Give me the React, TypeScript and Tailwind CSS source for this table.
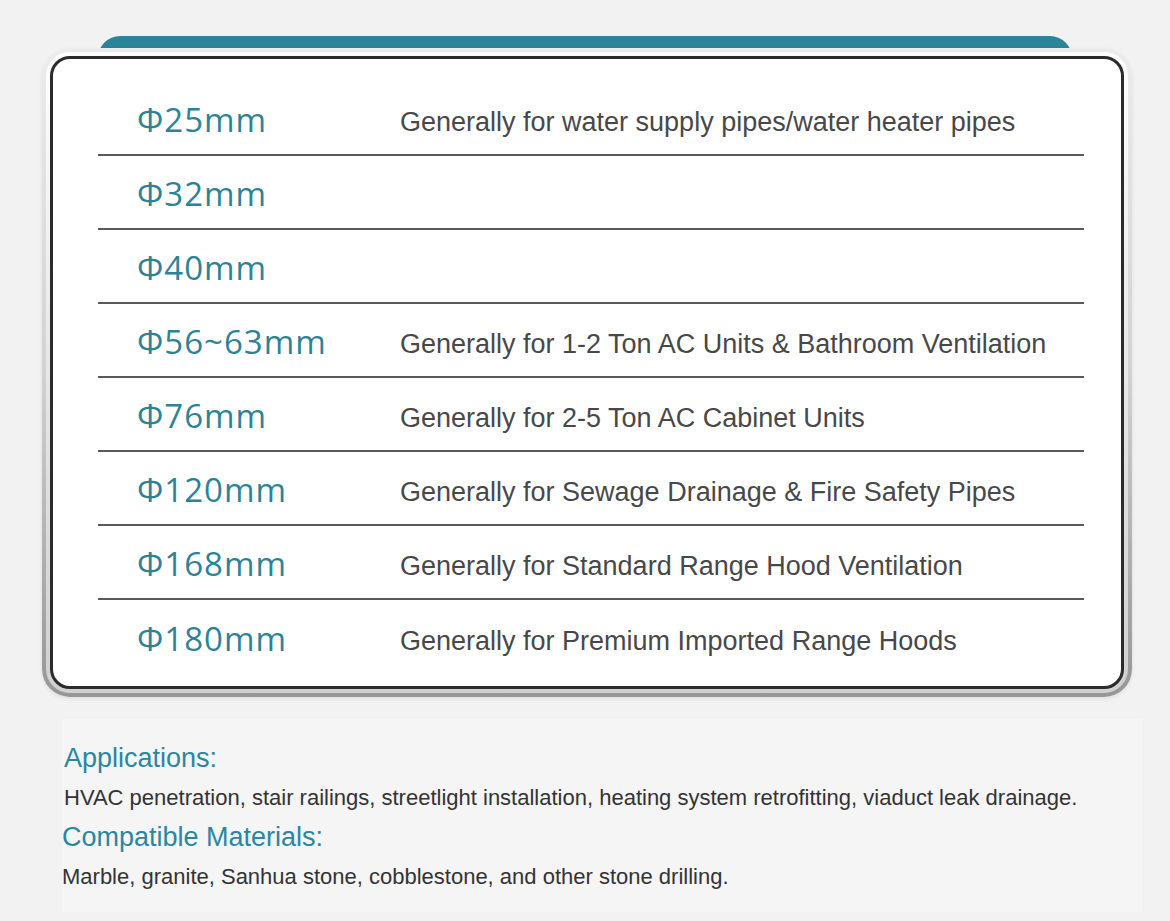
const rows = [
  { size: 'Φ25mm', use: 'Generally for water supply pipes/water heater pipes' },
  { size: 'Φ32mm', use: '' },
  { size: 'Φ40mm', use: '' },
  { size: 'Φ56~63mm', use: 'Generally for 1-2 Ton AC Units & Bathroom Ventilation' },
  { size: 'Φ76mm', use: 'Generally for 2-5 Ton AC Cabinet Units' },
  { size: 'Φ120mm', use: 'Generally for Sewage Drainage & Fire Safety Pipes' },
  { size: 'Φ168mm', use: 'Generally for Standard Range Hood Ventilation' },
  { size: 'Φ180mm', use: 'Generally for Premium Imported Range Hoods' },
];

export default function App() {
  return (
    <div
      className="h-[921px] w-[1170px] overflow-hidden bg-[#f2f2f2]"
      style={{ fontFamily: '"Liberation Sans", Arial, sans-serif' }}
    >
      <div className="px-[42px] pt-[36px]">
        <div className="mx-[56px] h-[24px] rounded-t-[22px] bg-[#2a8599]" />
        <div className="-mt-[12px] w-[1090px] rounded-[28px] bg-gradient-to-b from-[#ececec] via-[#d2d2d2] to-[#969696] p-[4px] shadow-[0_2px_4px_rgba(0,0,0,0.08)]">
          <div className="rounded-[24px] bg-gradient-to-b from-white to-[#d0d0d0] p-[4px]">
            <div className="rounded-[20px] border-[3px] border-[#2b2b2b] bg-white pl-[45px] pr-[37px] pt-[23px] pb-[12px]">
              {rows.map((row, i) => (
                <div
                  key={row.size}
                  className={`flex h-[74px] items-center pt-[3px] ${i < rows.length - 1 ? 'border-b-[2px] border-[#5a5a5a]' : ''}`}
                >
                  <div
                    className="w-[302px] shrink-0 pl-[39px] text-[33px] tracking-[1px] text-[#2d8396]"
                    style={{ fontFamily: '"Open Sans", "Noto Sans", sans-serif' }}
                  >
                    {row.size}
                  </div>
                  <div className="pt-[5px] text-[27px] text-[#484848]">{row.use}</div>
                </div>
              ))}
            </div>
          </div>
        </div>
      </div>
      <div className="ml-[62px] mt-[22px] w-[1080px] bg-[#f5f5f5] pl-[2px] pt-[21px] pb-[20px]">
        <div className="text-[27px] leading-[36px] text-[#2a87a0]">Applications:</div>
        <div className="mt-[7px] text-[22px] leading-[30px] text-[#333]">
          HVAC penetration, stair railings, streetlight installation, heating system retrofitting, viaduct leak drainage.
        </div>
        <div className="-ml-[2px] mt-[6px] text-[27px] leading-[36px] text-[#2a87a0]">Compatible Materials:</div>
        <div className="-ml-[2px] mt-[7px] text-[22px] leading-[30px] text-[#333]">
          Marble, granite, Sanhua stone, cobblestone, and other stone drilling.
        </div>
      </div>
    </div>
  );
}
